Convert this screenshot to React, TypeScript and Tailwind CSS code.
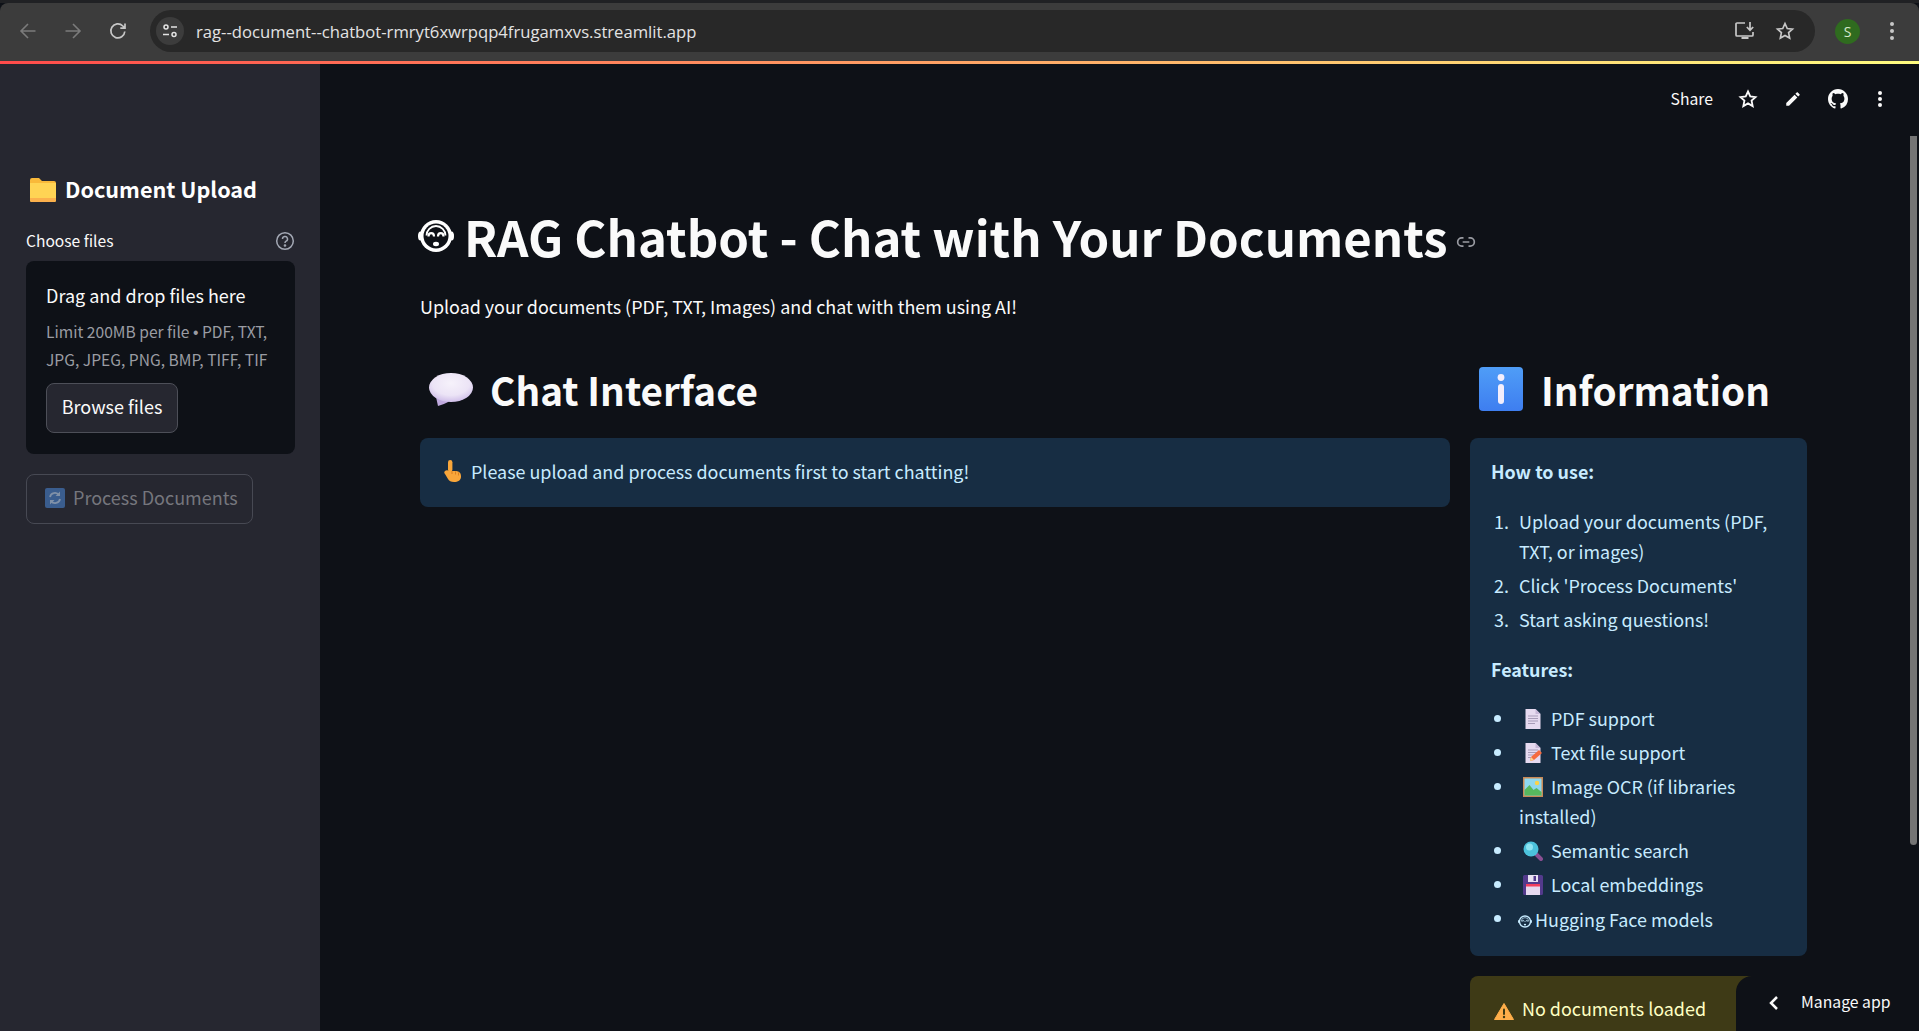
import React from "react";

const F = { fontFamily: '"Noto Sans CJK SC", "Noto Sans", sans-serif' };

function Hug({ w, h, color = "#fff", bg = "#0e1117" }: { w: number; h: number; color?: string; bg?: string }) {
  return (
    <svg width={w} height={h} viewBox="0 0 36 32" className="inline-block shrink-0">
      <circle cx="18" cy="16" r="16" fill={color} />
      <ellipse cx="2.500" cy="16" rx="2.500" ry="4.500" fill={color} />
      <ellipse cx="33.500" cy="16" rx="2.500" ry="4.500" fill={color} />
      <circle cx="18" cy="16" r="12.500" fill={bg} />
      <path d="M8.500 15.500a9.500 9.500 0 0 1 19 0" fill="none" stroke={color} strokeWidth="1.800" />
      <path d="M10.500 16.500c0-4.500 5.500-4.500 5.500 0M20 16.500c0-4.500 5.500-4.500 5.500 0" fill="none" stroke={color} strokeWidth="2.200" />
      <ellipse cx="18" cy="24" rx="3" ry="2.200" fill={color} />
    </svg>
  );
}
function Folder() {
  return (
    <svg width="26" height="24" viewBox="0 0 26 24">
      <path d="M0 2a2 2 0 0 1 2-2h7l3 3h12a2 2 0 0 1 2 2v17a2 2 0 0 1-2 2H2a2 2 0 0 1-2-2z" fill="#f9b93a" />
      <path d="M0 5h26v17a2 2 0 0 1-2 2H2a2 2 0 0 1-2-2z" fill="#ffd454" />
      <path d="M0 20h26v2a2 2 0 0 1-2 2H2a2 2 0 0 1-2-2z" fill="#fbb04c" />
    </svg>
  );
}
function Bubble() {
  return (
    <svg width="44" height="33" viewBox="0 0 44 33">
      <defs>
        <radialGradient id="bb" cx="0.500" cy="0.350" r="0.700">
          <stop offset="0" stopColor="#f6f2fb" />
          <stop offset="0.600" stopColor="#ece4f6" />
          <stop offset="1" stopColor="#c9b6e6" />
        </radialGradient>
      </defs>
      <path d="M7 24l2 9c4-1 8-3 11-4.500z" fill="#bfa9de" />
      <ellipse cx="22" cy="14.500" rx="22" ry="14.500" fill="url(#bb)" />
    </svg>
  );
}
function InfoBox() {
  return (
    <svg width="44" height="44" viewBox="0 0 44 44">
      <defs>
        <linearGradient id="ib" x1="0" y1="0" x2="0" y2="1">
          <stop offset="0" stopColor="#4f9df7" />
          <stop offset="1" stopColor="#3e7ef0" />
        </linearGradient>
      </defs>
      <rect width="44" height="44" rx="4" fill="url(#ib)" />
      <circle cx="22" cy="10.500" r="3.400" fill="#f3eefc" />
      <rect x="19" y="17" width="6" height="20" rx="3" fill="#f3eefc" />
    </svg>
  );
}
function Hand() {
  return (
    <svg width="21" height="22" viewBox="0 0 21 22">
      <rect x="6" y="0" width="4.400" height="12" rx="2.200" fill="#f9a63a" />
      <path d="M3 11c1-1 3-1 4 0h6c3 0 6 1 6 5v1c0 3-3 5-7 5-3 0-5-1-6-3l-3-5c-1-1-1-2 0-3z" fill="#f9a63a" />
      <path d="M10 11v3M13.500 11.500v3M16.500 12.500v3" stroke="#d97f20" strokeWidth="1" />
    </svg>
  );
}
function Doc({ pencil = false }: { pencil?: boolean }) {
  return (
    <svg width="20" height="20" viewBox="0 0 20 20">
      <path d="M2.500 0h10l5 5v15h-15z" fill="#e6daf0" />
      <path d="M12.500 0l5 5h-5z" fill="#c7b7d8" />
      <path d="M5 7h10M5 9.500h10M5 12h10M5 14.500h7" stroke="#a79bb8" strokeWidth="1" />
      {pencil && <path d="M7 18l1-4 8-7 3 3-8 7z" fill="#f56a3f" />}
      {pencil && <path d="M7 18l1-4 3 3z" fill="#fbd38d" />}
    </svg>
  );
}
function Picture() {
  return (
    <svg width="20" height="20" viewBox="0 0 20 20">
      <rect width="20" height="20" fill="#c98a56" />
      <rect x="1.500" y="1.500" width="17" height="17" fill="#8fd8f0" />
      <circle cx="14" cy="6" r="2.200" fill="#fbd24a" />
      <path d="M1.500 13l5-5 4 5 3-2 5 4v3.500h-17z" fill="#57b85e" />
    </svg>
  );
}
function Glass() {
  return (
    <svg width="20" height="20" viewBox="0 0 20 20">
      <path d="M11 11l7 7" stroke="#8a4f92" strokeWidth="4" strokeLinecap="round" />
      <circle cx="8" cy="8" r="7.500" fill="#4cc2dc" />
      <circle cx="6.500" cy="6" r="3.500" fill="#8ee4f2" />
    </svg>
  );
}
function Floppy() {
  return (
    <svg width="20" height="20" viewBox="0 0 20 20">
      <path d="M1.500 0h17a1.500 1.500 0 0 1 1.500 1.500v17a1.500 1.500 0 0 1-1.500 1.500h-17a1.500 1.500 0 0 1-1.500-1.500v-17a1.500 1.500 0 0 1 1.500-1.500z" fill="#533a8c" />
      <rect x="5" y="0" width="10" height="7" fill="#e8e2f2" />
      <rect x="10.500" y="1" width="2.500" height="5" fill="#533a8c" />
      <rect x="3" y="9" width="14" height="11" fill="#e6daf0" />
      <rect x="3" y="9" width="14" height="2.500" fill="#f23f5d" />
    </svg>
  );
}
function Warn() {
  return (
    <svg width="20" height="17" viewBox="0 0 20 17">
      <path d="M10 0.500l9.500 16H0.500z" fill="#ffae4a" stroke="#ffae4a" strokeLinejoin="round" />
      <rect x="9" y="5.500" width="2" height="6.500" rx="1" fill="#3d3a14" />
      <circle cx="10" cy="14" r="1.200" fill="#3d3a14" />
    </svg>
  );
}
function Refresh() {
  return (
    <svg width="20" height="20" viewBox="0 0 20 20">
      <rect width="20" height="20" rx="2" fill="#3a5d8e" />
      <path d="M5 9a5 5 0 0 1 9-2M15 11a5 5 0 0 1-9 2" fill="none" stroke="#8091a8" strokeWidth="1.800" />
      <path d="M15 3.500v4.500h-4.500zM5 16.500V12h4.500z" fill="#8091a8" />
    </svg>
  );
}

function Emo({ children }: { children: React.ReactNode }) {
  return <span className="inline-flex w-[20px] h-[20px] align-[-3px] ml-1 mr-[8px]">{children}</span>;
}
function Step({ n, children, first = false }: { n: string; children: React.ReactNode; first?: boolean }) {
  return (
    <li className={first ? "flex" : "flex mt-[4px]"}>
      <span className="w-[18px] mr-[10px] shrink-0 text-right">{n}</span>
      <span>{children}</span>
    </li>
  );
}
function Bullet({ children, first = false }: { children: React.ReactNode; first?: boolean }) {
  return (
    <li className={first ? "flex" : "flex mt-[4px]"}>
      <span className="w-[28px] shrink-0 pl-[3px] pt-[12px]">
        <span className="block w-[7px] h-[7px] rounded-full bg-[#c7ebff]" />
      </span>
      <span>{children}</span>
    </li>
  );
}

export default function App() {
  return (
    <div className="h-[1031px] w-[1919px] overflow-hidden flex flex-col bg-[#0e1117] relative" style={F}>
      {/* browser chrome */}
      <div className="h-[3px] bg-[#202124] shrink-0" />
      <div className="h-[58px] shrink-0 bg-[#3c3c3c] rounded-t-[8px] flex items-center pl-[18px] pb-[2px]">
        <svg width="20" height="20" viewBox="0 0 20 20" fill="none" stroke="#7b7b7b" strokeWidth="1.600"><path d="M17.500 10H3M10 3l-7 7 7 7" /></svg>
        <svg width="20" height="20" viewBox="0 0 20 20" fill="none" stroke="#7b7b7b" strokeWidth="1.600" className="ml-[25px]"><path d="M2.500 10H17M10 3l7 7-7 7" /></svg>
        <svg width="20" height="20" viewBox="0 0 20 20" fill="none" stroke="#c7c7c7" strokeWidth="1.700" className="ml-[25px]"><path d="M16.800 10.500a7 7 0 1 1-2-5.500L17 7.200M17 2.500v4.700h-4.700" /></svg>
        <div className="ml-[22px] h-[42px] w-[1665px] rounded-full bg-[#282828] flex items-center pl-[6px] pr-[20px]">
          <div className="w-[28px] h-[28px] rounded-full bg-[#3c3c3c] flex items-center justify-center">
            <svg width="18" height="18" viewBox="0 0 18 18" fill="none" stroke="#e3e3e3" strokeWidth="1.500"><circle cx="5" cy="5" r="2" /><path d="M10 5h6M2 12.500h6" /><circle cx="13" cy="12.500" r="2" /></svg>
          </div>
          <span className="ml-[12px] mt-[2px] text-[16.650px] text-[#e3e3e3]" style={{ fontFamily: '"Open Sans", sans-serif' }}>rag--document--chatbot-rmryt6xwrpqp4frugamxvs.streamlit.app</span>
          <div className="ml-auto flex items-center gap-[19px]">
            <svg width="22" height="22" viewBox="0 0 22 22" fill="none" stroke="#c7c7c7" strokeWidth="1.700"><path d="M11 3H3a1 1 0 0 0-1 1v11a1 1 0 0 0 1 1h15a1 1 0 0 0 1-1v-3" /><path d="M16 2v8M12.800 7l3.200 3.200L19.200 7" /><rect x="7.500" y="17" width="7" height="2" fill="#c7c7c7" stroke="none" /></svg>
            <svg width="20" height="20" viewBox="0 0 24 24" fill="none" stroke="#c7c7c7" strokeWidth="2"><path d="M12 3l2.700 6 6.300.700-4.700 4.300 1.300 6.500L12 17.300 6.400 20.500l1.300-6.500L3 9.700 9.300 9z" /></svg>
          </div>
        </div>
        <div className="ml-[20px] w-[25px] h-[25px] rounded-full bg-[#2f6b1f] flex items-center justify-center text-[#d5e8cc] text-[14px]" style={{ fontFamily: '"Open Sans", sans-serif' }}>S</div>
        <div className="ml-[30px] flex flex-col gap-[3px]">
          <span className="w-[4px] h-[4px] rounded-full bg-[#c7c7c7]" />
          <span className="w-[4px] h-[4px] rounded-full bg-[#c7c7c7]" />
          <span className="w-[4px] h-[4px] rounded-full bg-[#c7c7c7]" />
        </div>
      </div>
      <div className="h-[3px] shrink-0 bg-[linear-gradient(90deg,#ff4b4b,#fffd80)]" />

      <div className="flex-1 flex min-h-0">
        {/* sidebar */}
        <aside className="w-[320px] shrink-0 bg-[#262730] pl-[26px] pr-[25px] pt-[107px]">
          <div className="flex items-center h-[36px] text-white pl-[4px]">
            <span className="mr-[9px] mt-[2px] block h-[24px]"><Folder /></span>
            <span className="text-[21.600px] font-semibold leading-[36px]">Document Upload</span>
          </div>
          <div className="flex items-center justify-between mt-[22px] h-[24px]">
            <span className="text-[15.600px] text-[#fafafa]">Choose files</span>
            <svg width="20" height="20" viewBox="0 0 20 20" fill="none" stroke="#a3a8b4" strokeWidth="1.500"><circle cx="10" cy="10" r="8.300" /><path d="M7.500 8a2.500 2.500 0 1 1 3.600 2.200c-.8.400-1.100.9-1.100 1.800" /><circle cx="10" cy="14.500" r=".6" fill="#a3a8b4" /></svg>
          </div>
          <div className="mt-[8px] h-[193px] bg-[#0e1117] rounded-[8px] px-[20px] pt-[20px]">
            <div className="text-[18px] leading-[28px] text-[#fafafa]">Drag and drop files here</div>
            <div className="text-[15.600px] leading-[28px] text-[#9a9ca3] mt-[8px] whitespace-nowrap">
              Limit 200MB per file <span className="font-['Liberation_Sans'] leading-none">•</span> PDF, TXT,<br />JPG, JPEG, PNG, BMP, TIFF, TIF
            </div>
            <div className="mt-[10px] w-[132px] h-[50px] pb-[3px] rounded-[8px] border border-[#4d4f58] bg-[#262730] flex items-center justify-center text-[18px] text-[#fafafa]">Browse files</div>
          </div>
          <div className="mt-[20px] w-[227px] h-[50px] pb-[3px] rounded-[8px] border border-[#474953] flex items-center pl-[18px] text-[18px] text-[#75767d]">
            <Refresh />
            <span className="ml-[8px] whitespace-nowrap">Process Documents</span>
          </div>
        </aside>

        {/* main */}
        <main className="flex-1 min-w-0 pl-[100px] pr-[112px] relative">
          <div className="absolute top-[23px] right-[37px] flex items-center text-[#fafafa]">
            <span className="text-[15.750px] leading-[24px]">Share</span>
            <svg className="ml-[25px]" width="20" height="20" viewBox="0 0 24 24" fill="none" stroke="#fafafa" strokeWidth="2.200"><path d="M12 3l2.700 6 6.300.700-4.700 4.300 1.300 6.500L12 17.300 6.400 20.500l1.300-6.500L3 9.700 9.300 9z" /></svg>
            <svg className="ml-[26px]" width="18" height="18" viewBox="0 0 24 24" fill="#fafafa"><path d="M3 17.300V21h3.700L17.800 9.900l-3.700-3.700zM20.700 7c.4-.4.4-1 0-1.400l-2.300-2.300c-.4-.4-1-.4-1.400 0l-1.800 1.800 3.700 3.700z" /></svg>
            <svg className="ml-[26px]" width="20" height="20" viewBox="0 0 16 16" fill="#fafafa"><path d="M8 0C3.580 0 0 3.580 0 8c0 3.540 2.290 6.530 5.470 7.590.4.070.55-.17.55-.38 0-.19-.01-.82-.01-1.490-2.010.37-2.530-.49-2.690-.94-.09-.23-.48-.94-.82-1.130-.28-.15-.68-.52-.01-.53.630-.01 1.080.58 1.230.82.720 1.210 1.870.87 2.330.66.070-.52.280-.87.510-1.070-1.780-.2-3.640-.89-3.640-3.950 0-.87.310-1.590.82-2.150-.08-.2-.36-1.020.08-2.120 0 0 .67-.21 2.200.82.640-.18 1.320-.27 2-.27s1.360.09 2 .27c1.530-1.040 2.200-.82 2.200-.82.440 1.100.160 1.920.08 2.120.51.560.82 1.270.82 2.150 0 3.070-1.870 3.750-3.650 3.950.29.250.54.730.54 1.480 0 1.070-.01 1.930-.01 2.200 0 .21.150.46.550.38A8.010 8.010 0 0 0 16 8c0-4.420-3.580-8-8-8z" /></svg>
            <div className="ml-[30px] flex flex-col gap-[2px]">
              <span className="w-[4px] h-[4px] rounded-full bg-[#fafafa]" />
              <span className="w-[4px] h-[4px] rounded-full bg-[#fafafa]" />
              <span className="w-[4px] h-[4px] rounded-full bg-[#fafafa]" />
            </div>
          </div>

          <h1 className="pt-[136px] flex items-center h-[207px] text-[#fafafa] text-[49.100px] font-bold leading-[64px] -ml-[2px]">
            <Hug w={36} h={32} />
            <span className="ml-[10px] whitespace-nowrap">RAG Chatbot - Chat with Your Documents</span>
            <svg className="ml-[8px] mt-[13px]" width="20" height="20" viewBox="0 0 24 24" fill="none" stroke="#9a9ca3" strokeWidth="2"><path d="M9 17H7A5 5 0 0 1 7 7h2M15 7h2a5 5 0 1 1 0 10h-2M8 12h8" /></svg>
          </h1>
          <p className="mt-[21px] text-[#fafafa] text-[17.920px] leading-[28px]">Upload your documents (PDF, TXT, Images) and chat with them using AI!</p>

          <div className="mt-[42px] flex gap-[20px] items-start">
            <div className="flex-1 min-w-0">
              <h2 className="h-[54px] flex items-center text-[#fafafa] text-[38.700px] font-semibold pl-[9px]">
                <Bubble />
                <span className="ml-[17px]">Chat Interface</span>
              </h2>
              <div className="mt-[22px] h-[69px] pb-[3px] rounded-[8px] bg-[#172d43] flex items-center pl-[22px] text-[17.920px] text-[#c7ebff]">
                <Hand />
                <span className="ml-[8px]">Please upload and process documents first to start chatting!</span>
              </div>
            </div>
            <div className="w-[337px] shrink-0">
              <h2 className="h-[54px] flex items-center text-[#fafafa] text-[38.700px] font-semibold pl-[9px]">
                <InfoBox />
                <span className="ml-[18px]">Information</span>
              </h2>
              <div className="mt-[22px] h-[518px] rounded-[8px] bg-[#172d43] px-[21px] pt-[18px] text-[17.920px] leading-[30px] text-[#c7ebff]">
                <p className="font-semibold">How to use:</p>
                <ol className="mt-[20px]">
                  <Step n="1." first>Upload your documents (PDF, TXT, or images)</Step>
                  <Step n="2.">Click 'Process Documents'</Step>
                  <Step n="3.">Start asking questions!</Step>
                </ol>
                <p className="font-semibold mt-[20px]">Features:</p>
                <ul className="mt-[19px]">
                  <Bullet first><Emo><Doc /></Emo>PDF support</Bullet>
                  <Bullet><Emo><Doc pencil /></Emo>Text file support</Bullet>
                  <Bullet><Emo><Picture /></Emo>Image OCR (if libraries installed)</Bullet>
                  <Bullet><Emo><Glass /></Emo>Semantic search</Bullet>
                  <Bullet><Emo><Floppy /></Emo>Local embeddings</Bullet>
                  <Bullet><span className="inline-block align-[1px] mr-[3px] -ml-[1px]"><Hug w={14} h={13} color="#c7ebff" bg="#172d43" /></span>Hugging Face models</Bullet>
                </ul>
              </div>
              <div className="mt-[20px] h-[80px] rounded-t-[8px] bg-[#3e3a16] flex items-start pl-[24px] pt-[19px] text-[17.920px] text-[#ffffc2]">
                <span className="mt-[8px] block h-[17px]"><Warn /></span>
                <span className="ml-[8px]">No documents loaded</span>
              </div>
            </div>
          </div>
        </main>
      </div>

      {/* scrollbar */}
      <div className="absolute left-[1910px] top-[136px] w-[7px] h-[709px] rounded-b-full bg-[#757575]" />
      {/* manage app */}
      <div className="absolute right-0 bottom-0 w-[183px] h-[55px] bg-[#0e1117] rounded-tl-[16px] flex items-start pl-[32px] pt-[14px] text-[#fafafa]">
        <svg className="mt-[5px]" width="12" height="16" viewBox="0 0 12 16" fill="none" stroke="#fafafa" strokeWidth="2.500"><path d="M9 2L3 8l6 6" /></svg>
        <span className="ml-[21px] text-[15.750px] leading-[24px]">Manage app</span>
      </div>
    </div>
  );
}
